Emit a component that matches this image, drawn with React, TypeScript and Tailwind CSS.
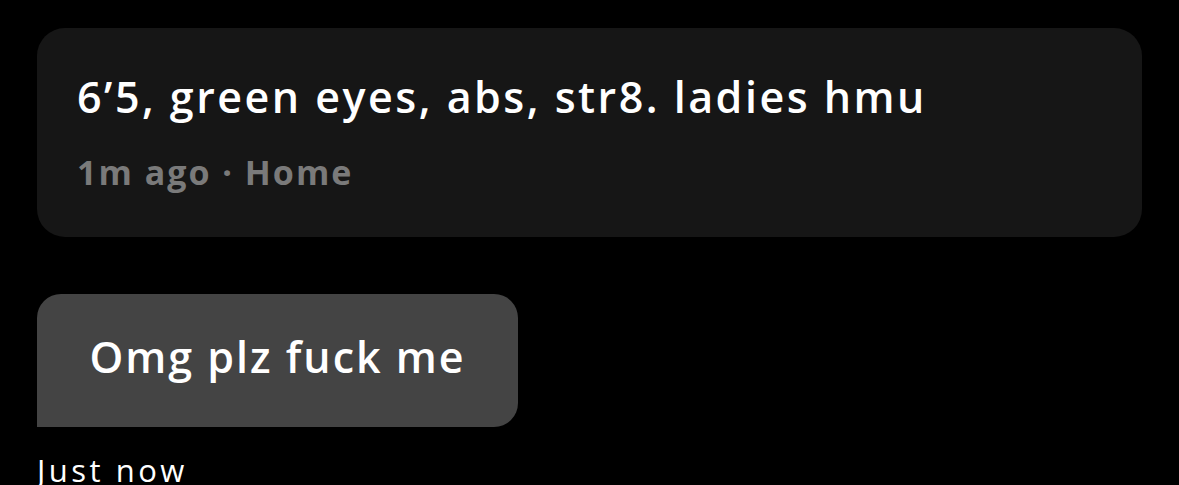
export default function App() {
  return (
    <div className="w-[1179px] h-[485px] bg-black overflow-hidden" style={{ fontFamily: "'Open Sans', Lato, sans-serif" }}>
      <div className="pt-[28px] pl-[37px] pr-[37px]">
        <div className="h-[209px] rounded-[28px] bg-[#161616] pl-[40px] pt-[43px]">
          <div className="text-white text-[43px] leading-[52px] font-semibold tracking-[2.5px]">6’5, green eyes, abs, str8. ladies hmu</div>
          <div className="text-[#7a7a7a] text-[34px] leading-[40px] font-bold tracking-[2px] mt-[29px]">1m ago · Home</div>
        </div>
        <div className="mt-[57px] w-[481px] h-[133px] rounded-[24px] rounded-bl-none bg-[#444444] flex items-center justify-center pb-[6px]">
          <div className="text-white text-[43px] font-semibold tracking-[2px]">Omg plz fuck me</div>
        </div>
        <div className="mt-[23px] text-white text-[31px] leading-[40px] font-medium tracking-[3.5px]">Just now</div>
      </div>
    </div>
  );
}
